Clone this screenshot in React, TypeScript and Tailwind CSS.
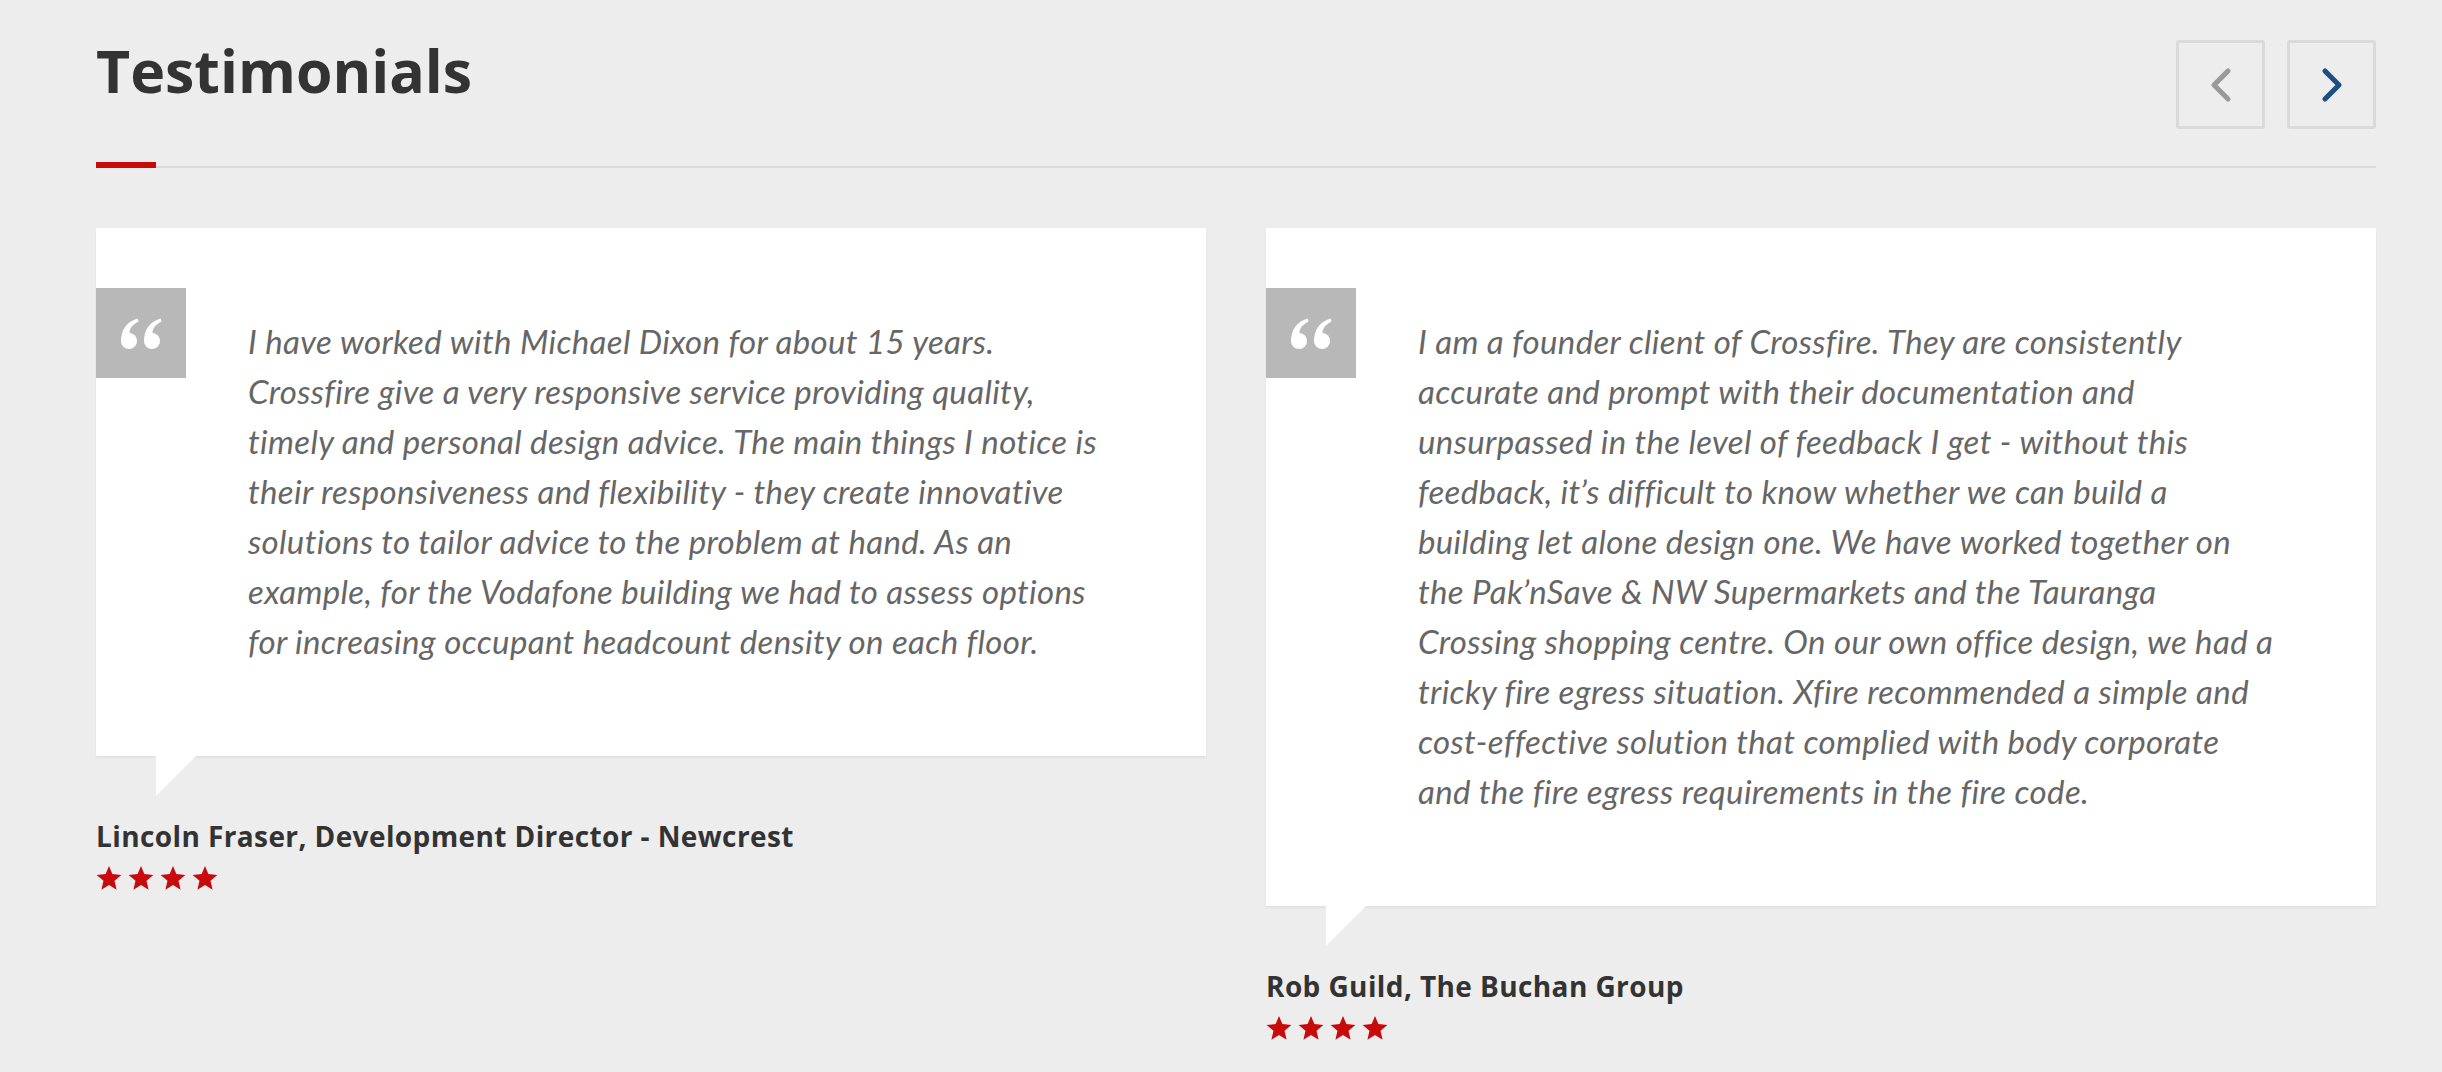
import { ChevronLeft, ChevronRight } from "lucide-react";

type Testimonial = {
  lines: string[];
  author: string;
  rating: number;
};

const testimonials: Testimonial[] = [
  {
    lines: [
      "I have worked with Michael Dixon for about 15 years.",
      "Crossfire give a very responsive service providing quality,",
      "timely and personal design advice. The main things I notice is",
      "their responsiveness and flexibility - they create innovative",
      "solutions to tailor advice to the problem at hand. As an",
      "example, for the Vodafone building we had to assess options",
      "for increasing occupant headcount density on each floor.",
    ],
    author: "Lincoln Fraser, Development Director - Newcrest",
    rating: 4,
  },
  {
    lines: [
      "I am a founder client of Crossfire. They are consistently",
      "accurate and prompt with their documentation and",
      "unsurpassed in the level of feedback I get - without this",
      "feedback, it\u2019s difficult to know whether we can build a",
      "building let alone design one. We have worked together on",
      "the Pak\u2019nSave & NW Supermarkets and the Tauranga",
      "Crossing shopping centre. On our own office design, we had a",
      "tricky fire egress situation. Xfire recommended a simple and",
      "cost-effective solution that complied with body corporate",
      "and the fire egress requirements in the fire code.",
    ],
    author: "Rob Guild, The Buchan Group",
    rating: 4,
  },
];

function QuoteMark() {
  return (
    <svg width="42" height="31" viewBox="0 0 42 31" fill="#fff">
      <circle cx="9" cy="23" r="8" />
      <path d="M1.2 23C0.8 12 7 3.5 17.5 0.5L18.6 3.6C12 6.8 9.2 11.5 9.6 15.2Z" />
      <circle cx="32" cy="23" r="8" />
      <path d="M24.2 23C23.8 12 30 3.5 40.5 0.5L41.6 3.6C35 6.8 32.2 11.5 32.6 15.2Z" />
    </svg>
  );
}

function Stars({ count }: { count: number }) {
  return (
    <div className="flex gap-[6px]">
      {Array.from({ length: count }).map((_, i) => (
        <svg key={i} width="26" height="26" viewBox="0 0 24 24" fill="#c80a0a">
          <polygon points="12,1 15.1,8.4 23.4,9.2 17.1,14.6 19,22.8 12,18.5 5,22.8 6.9,14.6 0.6,9.2 8.9,8.4" />
        </svg>
      ))}
    </div>
  );
}

function TestimonialCard({ t }: { t: Testimonial }) {
  return (
    <div className="flex flex-col">
      <div className="relative flex bg-white pt-[60px] pb-[90px] pr-[60px] shadow-[0_2px_2px_rgba(0,0,0,0.05)]">
        <div className="flex h-[90px] w-[90px] shrink-0 items-center justify-center bg-[#b8b8b8]">
          <QuoteMark />
        </div>
        <p className="ml-[62px] mt-[28px] text-[33px] italic leading-[50px] tracking-[0.35px] text-[#666] font-['Lato',sans-serif]">
          {t.lines.map((line, i) => (
            <span key={i} className="block whitespace-nowrap">
              {line}
            </span>
          ))}
        </p>
        <div className="absolute left-[60px] top-full h-[40px] w-[40px] bg-white [clip-path:polygon(0_0,100%_0,0_100%)]" />
      </div>
      <h3 className="mt-[63px] text-[28px] font-bold leading-[34px] tracking-[0.4px] text-[#333] font-['Open_Sans',sans-serif]">
        {t.author}
      </h3>
      <div className="mt-[12px]">
        <Stars count={t.rating} />
      </div>
    </div>
  );
}

export default function App() {
  return (
    <div className="min-h-[1072px] w-full bg-[#ededed] pl-[96px] pt-[40px]">
      <div className="w-[2280px]">
        <div className="flex items-start justify-between">
          <h2 className="text-[59px] font-bold leading-[60px] text-[#333] font-['Open_Sans',sans-serif]">
            Testimonials
          </h2>
          <div className="flex gap-[22px]">
            <button className="flex h-[89px] w-[89px] items-center justify-center rounded-[3px] border-[3px] border-[#dadada] text-[#9a9a9a]">
              <ChevronLeft size={56} strokeWidth={2.2} />
            </button>
            <button className="flex h-[89px] w-[89px] items-center justify-center rounded-[3px] border-[3px] border-[#dadada] text-[#1f4f80]">
              <ChevronRight size={56} strokeWidth={2.2} />
            </button>
          </div>
        </div>
        <div className="mt-[33px] flex items-end">
          <div className="h-[6px] w-[60px] bg-[#c80a0a]" />
          <div className="h-[2px] flex-1 bg-[#dadada]" />
        </div>
        <div className="mt-[60px] grid grid-cols-2 items-start gap-[60px]">
          {testimonials.map((t) => (
            <TestimonialCard key={t.author} t={t} />
          ))}
        </div>
      </div>
    </div>
  );
}
